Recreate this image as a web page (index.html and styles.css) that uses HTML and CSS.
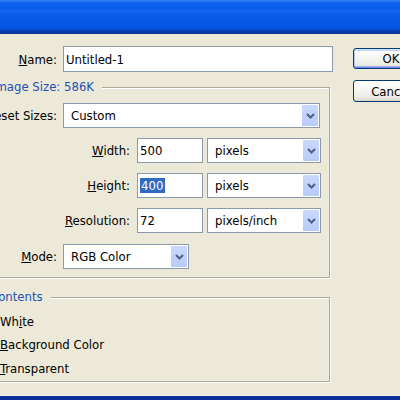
FILE: index.html
```html
<!DOCTYPE html>
<html>
<head>
<meta charset="utf-8">
<link rel="stylesheet" href="styles.css">
</head>
<body>
<div class="window">
  <div class="titlebar"></div>
  <div class="content">
    <div class="main">
      <div class="row name-row">
        <label class="lbl lbl-name"><u>N</u>ame:</label>
        <div class="field field-name">Untitled-1</div>
      </div>
      <div class="group group-size">
        <div class="legend legend-size">Image Size: 586K</div>
        <div class="row preset-row">
          <label class="lbl lbl-short"><u>P</u>reset Sizes:</label>
          <div class="select select-preset"><span class="sel-text">Custom</span><span class="arrow"><svg width="9" height="6" viewBox="0 0 9 6"><path d="M1 1 L4.5 4.5 L8 1" fill="none" stroke="#4d6185" stroke-width="2"/></svg></span></div>
        </div>
        <div class="row dim-row">
          <label class="lbl lbl-long"><u>W</u>idth:</label>
          <div class="field field-num">500</div>
          <div class="select select-unit"><span class="sel-text">pixels</span><span class="arrow"><svg width="9" height="6" viewBox="0 0 9 6"><path d="M1 1 L4.5 4.5 L8 1" fill="none" stroke="#4d6185" stroke-width="2"/></svg></span></div>
        </div>
        <div class="row dim-row">
          <label class="lbl lbl-long"><u>H</u>eight:</label>
          <div class="field field-num"><span class="selected">400</span></div>
          <div class="select select-unit"><span class="sel-text">pixels</span><span class="arrow"><svg width="9" height="6" viewBox="0 0 9 6"><path d="M1 1 L4.5 4.5 L8 1" fill="none" stroke="#4d6185" stroke-width="2"/></svg></span></div>
        </div>
        <div class="row dim-row">
          <label class="lbl lbl-long"><u>R</u>esolution:</label>
          <div class="field field-num">72</div>
          <div class="select select-unit"><span class="sel-text">pixels/inch</span><span class="arrow"><svg width="9" height="6" viewBox="0 0 9 6"><path d="M1 1 L4.5 4.5 L8 1" fill="none" stroke="#4d6185" stroke-width="2"/></svg></span></div>
        </div>
        <div class="row mode-row">
          <label class="lbl lbl-short"><u>M</u>ode:</label>
          <div class="select select-mode"><span class="sel-text">RGB Color</span><span class="arrow"><svg width="9" height="6" viewBox="0 0 9 6"><path d="M1 1 L4.5 4.5 L8 1" fill="none" stroke="#4d6185" stroke-width="2"/></svg></span></div>
        </div>
      </div>
      <div class="group group-contents">
        <div class="legend legend-contents">Contents</div>
        <div class="radio first"><span class="dot on"></span><span>Wh<u>i</u>te</span></div>
        <div class="radio"><span class="dot"></span><span><u>B</u>ackground Color</span></div>
        <div class="radio last"><span class="dot"></span><span><u>T</u>ransparent</span></div>
      </div>
    </div>
    <div class="buttons">
      <div class="btn btn-ok">OK</div>
      <div class="btn btn-cancel">Cancel</div>
    </div>
  </div>
  <div class="bottom"></div>
</div>
</body>
</html>
```
FILE: styles.css
```css
html, body {
  margin: 0;
  padding: 0;
}
body {
  font-family: "DejaVu Sans Condensed", "DejaVu Sans", sans-serif;
  font-size: 13px;
  color: #000;
}
.window {
  width: 400px;
  height: 400px;
  overflow: hidden;
  background: #ece9d8;
  display: flex;
  flex-direction: column;
}
.titlebar {
  height: 34px;
  flex-shrink: 0;
  background: linear-gradient(to bottom, #3a82f6 0px, #0e62ef 3px, #0a5deb 9px, #1766f0 11px, #0a5ceb 14px, #0857e6 26px, #0650d8 29px, #0a3fb0 31px, #0b3595 34px);
}
.content {
  flex: 1;
  display: flex;
  align-items: flex-start;
}
.main {
  margin-left: -40px;
  width: 373px;
  flex-shrink: 0;
  padding-top: 12px;
}
.row {
  display: flex;
  align-items: center;
  height: 25px;
}
.name-row {
  height: 26px;
}
.lbl {
  text-align: right;
  flex-shrink: 0;
  white-space: nowrap;
}
.lbl-name { width: 97px; margin-right: 6px; }
.lbl-short { width: 91px; margin-right: 6px; }
.lbl-long { width: 164px; margin-right: 7px; }
.field {
  box-sizing: border-box;
  height: 100%;
  background: #fff;
  border: 1px solid #8a9aab;
  display: flex;
  align-items: center;
  white-space: nowrap;
  flex-shrink: 0;
}
.field-name { width: 270px; padding-left: 2px; }
.field-num { width: 66px; padding-left: 2px; margin-right: 4px; }
.selected {
  background: #316ac5;
  color: #fff;
  line-height: 15px;
  padding: 0 2px 0 1px;
}
.select {
  box-sizing: border-box;
  height: 100%;
  background: #fff;
  border: 1px solid #8a9aab;
  display: flex;
  align-items: stretch;
  flex-shrink: 0;
  padding: 1px;
}
.sel-text {
  flex: 1;
  display: flex;
  align-items: center;
  padding-left: 6px;
  white-space: nowrap;
}
.arrow {
  width: 16px;
  display: flex;
  align-items: center;
  justify-content: center;
  background: linear-gradient(to bottom, #c9d9fc, #b8cbf8);
  border-radius: 1px;
}
.select-preset { width: 257px; }
.select-unit { width: 114px; }
.select-mode { width: 126px; }
.group {
  margin-left: 5px;
  width: 365px;
  box-sizing: border-box;
  border: 1px solid #aca899;
  box-shadow: inset 1px 1px 0 #fff, 1px 1px 0 #fff;
}
.group-size {
  margin-top: 15px;
  padding-bottom: 8px;
}
.legend {
  display: block;
  width: fit-content;
  background: #ece9d8;
  color: #1e50b4;
  line-height: 16px;
  height: 16px;
  margin-top: -9px;
  padding-right: 8px;
  white-space: nowrap;
}
.legend-size { margin-left: 26px; }
.legend-contents { margin-left: 24px; }
.preset-row { margin-top: 8px; }
.dim-row { margin-top: 10px; }
.mode-row { margin-top: 11px; }
.group-contents {
  margin-top: 19px;
  height: 85px;
}
.radio {
  display: flex;
  align-items: center;
  height: 23px;
  padding-left: 15px;
}
.radio.first { margin-top: 5px; }
.radio.last { margin-top: 1px; }
.dot {
  width: 11px;
  height: 11px;
  border: 1px solid #1c5180;
  border-radius: 50%;
  background: #fff;
  margin-right: 6px;
  flex-shrink: 0;
}
.buttons {
  flex-shrink: 0;
  margin-left: 20px;
  padding-top: 14px;
  display: flex;
  flex-direction: column;
  gap: 11px;
}
.btn {
  box-sizing: border-box;
  width: 76px;
  height: 21px;
  border: 1px solid #003c74;
  border-radius: 3px;
  background: linear-gradient(to bottom, #ffffff 0%, #f4f4ef 50%, #ecebe5 80%, #d8d3c9 100%);
  display: flex;
  align-items: center;
  justify-content: center;
  white-space: nowrap;
}
.btn-ok {
  box-shadow: inset 0 1px 0 #cee7ff, inset 0 -1px 0 #6982ee, inset 1px 0 0 #b2c9f5, inset -1px 0 0 #8aa6ec, inset 0 2px 0 #bcd4f6, inset 0 -2px 0 #a0b8f0;
}
.btn-cancel {
  height: 22px;
}
.bottom {
  height: 4px;
  flex-shrink: 0;
  background: #0c2f9a;
  border-top: 1px solid #f4f3ee;
}
```
